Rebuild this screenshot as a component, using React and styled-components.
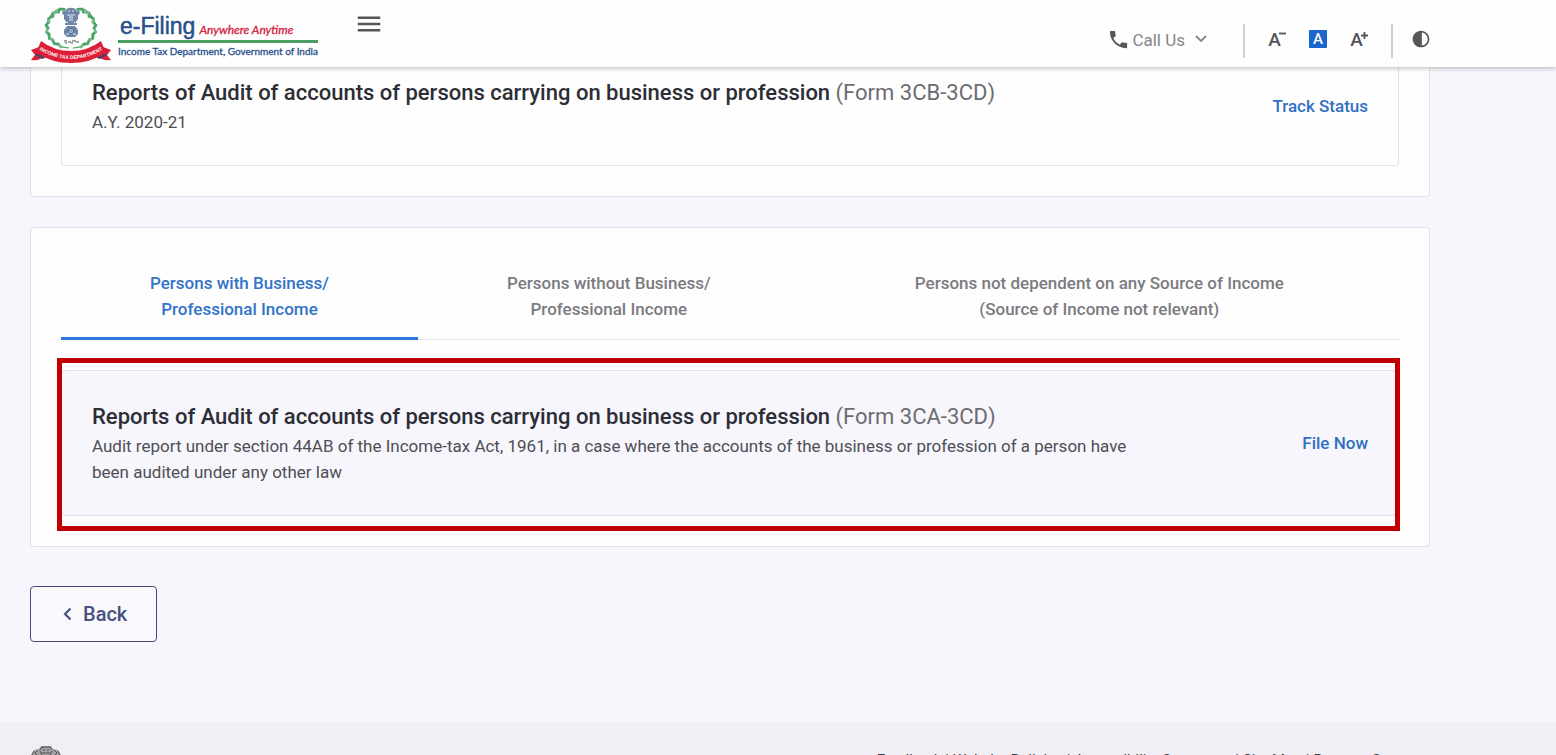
import React from "react";
import styled, { createGlobalStyle } from "styled-components";
import { MdPhone, MdMenu, MdContrast } from "react-icons/md";

const GlobalStyle = createGlobalStyle`
  *, *::before, *::after { box-sizing: border-box; }
  body {
    margin: 0;
    background: #f6f6fc;
    font-family: Roboto, "Liberation Sans", sans-serif;
    color: #2c2c34;
  }
  button { font-family: inherit; cursor: pointer; }
  h2, p { margin: 0; }
`;

const Page = styled.div`
  height: 100vh;
  overflow: hidden;
  display: flex;
  flex-direction: column;
`;

const Header = styled.header`
  position: relative;
  z-index: 1;
  flex: none;
  height: 67px;
  padding: 0 125px 0 30px;
  display: flex;
  align-items: flex-start;
  justify-content: space-between;
  background: #fefefe;
  box-shadow: 0 1px 5px rgba(0, 0, 0, 0.28);
`;

const HeaderStart = styled.div`
  display: flex;
  align-items: flex-start;
  gap: 36px;
`;

const Brand = styled.a`
  display: flex;
  gap: 6px;
  padding-top: 6px;
  text-decoration: none;
`;

const BrandText = styled.span`
  display: flex;
  flex-direction: column;
  padding-top: 6px;
  font-family: Lato, "Liberation Sans", sans-serif;
  white-space: nowrap;
`;

const BrandTop = styled.span`
  display: flex;
  align-items: baseline;
  gap: 4px;
  height: 31px;
  padding-left: 2px;
  line-height: 28px;
  border-bottom: 3px solid #4c9f63;
`;

const BrandName = styled.span`
  font-family: "Liberation Sans", sans-serif;
  font-size: 23px;
  color: #27508c;
  -webkit-text-stroke: 0.5px #27508c;
`;

const BrandTagline = styled.em`
  font-size: 12px;
  color: #d2203c;
  -webkit-text-stroke: 0.3px #d2203c;
`;

const BrandOwner = styled.span`
  font-size: 10px;
  line-height: 16px;
  color: #27508c;
  -webkit-text-stroke: 0.3px #27508c;
`;

const IconButton = styled.button`
  display: flex;
  align-items: center;
  justify-content: center;
  padding: 0;
  border: 0;
  background: none;
  color: #55555a;
`;

const MenuButton = styled(IconButton)`
  width: 30px;
  height: 48px;
`;

const Tools = styled.div`
  display: flex;
  align-items: flex-start;
  padding-top: 24px;
`;

const CallButton = styled(IconButton)`
  gap: 2px;
  height: 30px;
  margin-right: 36px;
  font-size: 17px;
  color: #85858a;
`;

const CallLabel = styled.span`
  padding: 2px 8px 0 0;
`;

const Divider = styled.span`
  width: 2px;
  height: 34px;
  background: #cfcfd2;
`;

const TextSizes = styled.div`
  display: flex;
  align-items: center;
  gap: 22px;
  height: 30px;
  padding: 0 22px;
`;

const SizeButton = styled(IconButton)`
  align-items: flex-start;
  width: 20px;
  height: 20px;
  font-size: 19px;
  line-height: 22px;
  font-weight: 500;
  svg { margin: 2px 0 0 -2px; }
`;

const SizeButtonActive = styled(IconButton)`
  width: 18px;
  height: 18px;
  border-radius: 1px;
  background: #1a66cc;
  color: #fff;
  font-size: 15px;
  font-weight: 500;
`;

const ContrastButton = styled(IconButton)`
  width: 20px;
  height: 30px;
  margin-left: 18px;
`;

const Main = styled.main`
  flex: none;
  padding: 0 126px 80px 30px;
  background: #f6f6fc;
`;

const Panel = styled.section`
  padding: 30px;
  background: #fefefe;
  border: 1px solid #e0e0e8;
  border-radius: 4px;
  & + & { margin-top: 30px; }
`;

const ScrolledPanel = styled(Panel)`
  padding-top: 0;
  border-top: 0;
  border-radius: 0 0 4px 4px;
`;

const FormCard = styled.article`
  position: relative;
  display: flex;
  align-items: center;
  justify-content: space-between;
  gap: 30px;
  padding: 30px;
  border: 1px solid #e2e2ea;
  border-radius: 4px;
  background: ${(p) => (p.$filled ? "#f6f6fc" : "#fefefe")};
`;

const ScrolledCard = styled(FormCard)`
  border-top: 0;
  border-radius: 0 0 4px 4px;
  padding-top: 10px;
`;

const Highlight = styled.div`
  position: absolute;
  inset: -13px -2px -16px -5px;
  border: 5px solid #c00000;
  pointer-events: none;
`;

const CardBody = styled.div`
  max-width: 1064px;
`;

const CardTitle = styled.h2`
  font-size: 22px;
  line-height: 32px;
  font-weight: 500;
  color: #2d2d35;
`;

const FormName = styled.span`
  font-weight: 400;
  color: #6c6c72;
`;

const CardText = styled.p`
  font-size: 17px;
  line-height: 26px;
  color: #4e4e55;
`;

const ActionLink = styled.a`
  flex: none;
  font-size: 17px;
  line-height: 24px;
  font-weight: 500;
  color: #2f70c4;
  text-decoration: none;
`;

const Tabs = styled.div`
  display: flex;
  margin-bottom: 30px;
  border-bottom: 1px solid #e2e2ea;
`;

const Tab = styled.button`
  flex: ${(p) => (p.$wide ? "1 1 auto" : "0 0 auto")};
  height: 82px;
  margin-bottom: -1px;
  padding: 0 89px 3px;
  border: 0;
  border-bottom: 3px solid ${(p) => (p.$active ? "#2878dc" : "transparent")};
  background: none;
  font-size: 17px;
  line-height: 26px;
  font-weight: 500;
  color: ${(p) => (p.$active ? "#3273c8" : "#7b7b80")};
`;

const BackButton = styled.button`
  display: flex;
  align-items: center;
  gap: 11px;
  height: 56px;
  margin-top: 39px;
  padding: 0 29px 0 32px;
  border: 1px solid #47477c;
  border-radius: 4px;
  background: #f8f8fd;
  font-size: 20px;
  font-weight: 500;
  color: #47517c;
`;

const Footer = styled.footer`
  flex: none;
  display: flex;
  align-items: flex-start;
  justify-content: space-between;
  padding: 24px 131px 24px 30px;
  background: #efeff5;
`;

const FooterLinks = styled.nav`
  display: flex;
  gap: 4px;
  padding-top: 4px;
  font-size: 15px;
  line-height: 20px;
  color: #3d3d44;
  a { color: inherit; text-decoration: none; }
`;

const leaves = Array.from({ length: 15 }, (_, i) => 38 + i * 9.4);

function Crest() {
  return (
    <svg width="82" height="59" viewBox="0 0 82 59" aria-hidden="true">
      {[1, -1].map((side) => (
        <g key={side} transform={side === 1 ? undefined : "translate(82 0) scale(-1 1)"}>
          <path d="M43 42 C56 41 65 34 65 21 C65 13 61 7 54 3" fill="none" stroke="#4fa568" strokeWidth="1.2" />
          {leaves.map((deg, i) => {
            const t = ((100 - deg) * Math.PI) / 180;
            const x = 41 + 24 * Math.cos(t);
            const y = 22 + 20 * Math.sin(t);
            return (
              <g key={deg} transform={`translate(${x} ${y}) rotate(${110 - deg + (i % 2 ? 35 : -35)})`}>
                <ellipse rx="1.4" ry="3.2" fill={i % 3 ? "#4ca466" : "#79bb8a"} />
              </g>
            );
          })}
        </g>
      ))}
      <g fill="#6f86a8">
        <path d="M36 4 C37 1 45 1 46 4 L48 7 L46 10 L45 15 L44 17 H38 L37 15 L36 10 L34 7 Z" />
        <path d="M35 5 C32 4 31 8 34 9 V13 L37 17 V7 Z" />
        <path d="M47 5 C50 4 51 8 48 9 V13 L45 17 V7 Z" />
        <rect x="35" y="17" width="12" height="2" />
        <path d="M37 20 H45 L48 24 V28 L45 31 H37 L34 28 V24 Z" />
      </g>
      <path d="M38 5h2m2 0h2M37 9h2m4 0h2M40 8v7M42 8v7M36 28h3m4 0h3" stroke="#e1e7f0" strokeWidth="1" />
      <circle cx="41" cy="25" r="2.6" fill="#dfe6f0" stroke="#4d6c99" />
      <path d="M41 23v4M39 25h4" stroke="#4d6c99" strokeWidth=".7" />
      <path d="M34 35h3m1 1h3m1-1h4m1 1h2M35 37h2m4 0h2m3-1h2" stroke="#4a4f53" strokeWidth="1.1" />
      <path d="M9 41 L1 44 L5 49 L1 54 Q9 55 17 50 Z" fill="#d71f35" />
      <path d="M73 41 L81 44 L77 49 L81 54 Q73 55 65 50 Z" fill="#d71f35" />
      <path d="M5 49 L13 53 L18 49 L10 46 Z M77 49 L69 53 L64 49 L72 46 Z" fill="#344a78" />
      <path d="M11 35 Q24 45 41 45 Q58 45 71 35 L76 47 Q60 57 41 57 Q22 57 6 47 Z" fill="#dd1e36" />
      <path id="crest-ribbon" d="M8 43 Q24 53 41 53 Q58 53 74 43" fill="none" />
      <text fontFamily="Liberation Sans, sans-serif" fontSize="5" fontWeight="700" fill="#fff">
        <textPath href="#crest-ribbon" startOffset="50%" textAnchor="middle">INCOME TAX DEPARTMENT</textPath>
      </text>
    </svg>
  );
}

function FooterEmblem() {
  return (
    <svg width="32" height="44" viewBox="0 0 32 44" aria-hidden="true">
      <path d="M9 3 L11 0 H21 L23 3 L28 4 L31 9 L28 18 L22 28 H10 L4 18 L1 9 L4 4 Z" fill="#a2a2a5" />
      <path d="M10 4l2-3h8l2 3M13 4h2m2 0h2M8 4L5 7l3 3M24 4l3 3-3 3M12 7h8M2 9l2-4M30 9l-2-4M10 5l2 4M22 5l-2 4" fill="none" stroke="#505055" strokeWidth="1" />
      <path d="M8 30h16v5H8zM5 37h22v3H5z" fill="#77777b" />
    </svg>
  );
}

const Chevron = ({ left }) => (
  <svg width={left ? 9 : 12} height={left ? 14 : 8} viewBox={left ? "0 0 9 14" : "0 0 12 8"} fill="none" stroke="currentColor" strokeWidth={left ? 2.2 : 1.8} aria-hidden="true">
    <path d={left ? "M7.5 1.5 2 7l5.5 5.5" : "M1 1l5 5 5-5"} />
  </svg>
);

const SizeMark = ({ plus }) => (
  <svg width="7" height="9" viewBox="0 0 7 9" stroke="currentColor" strokeWidth="1.8" aria-hidden="true">
    <path d={plus ? "M0 4.5h7M3.5 1v7" : "M0 2.5h7"} />
  </svg>
);

const footerItems = ["Feedback", "Website Policies", "Accessibility Statement", "Site Map", "Browser Support"];

export default function App() {
  return (
    <>
      <GlobalStyle />
      <Page>
        <Header>
          <HeaderStart>
            <Brand href="#home" aria-label="e-Filing home">
              <Crest />
              <BrandText>
                <BrandTop>
                  <BrandName>e-Filing</BrandName>
                  <BrandTagline>Anywhere Anytime</BrandTagline>
                </BrandTop>
                <BrandOwner>Income Tax Department, Government of India</BrandOwner>
              </BrandText>
            </Brand>
            <MenuButton aria-label="Menu"><MdMenu size={30} /></MenuButton>
          </HeaderStart>
          <Tools>
            <CallButton>
              <MdPhone size={23} color="#55555a" />
              <CallLabel>Call Us</CallLabel>
              <Chevron />
            </CallButton>
            <Divider />
            <TextSizes>
              <SizeButton aria-label="Decrease text size">A<SizeMark /></SizeButton>
              <SizeButtonActive aria-label="Default text size">A</SizeButtonActive>
              <SizeButton aria-label="Increase text size">A<SizeMark plus /></SizeButton>
            </TextSizes>
            <Divider />
            <ContrastButton aria-label="Contrast"><MdContrast size={22} /></ContrastButton>
          </Tools>
        </Header>
        <Main>
          <ScrolledPanel>
            <ScrolledCard>
              <CardBody>
                <CardTitle>
                  Reports of Audit of accounts of persons carrying on business or profession <FormName>(Form 3CB-3CD)</FormName>
                </CardTitle>
                <CardText>A.Y. 2020-21</CardText>
              </CardBody>
              <ActionLink href="#track">Track Status</ActionLink>
            </ScrolledCard>
          </ScrolledPanel>
          <Panel>
            <Tabs role="tablist">
              <Tab role="tab" aria-selected="true" $active>Persons with Business/<br />Professional Income</Tab>
              <Tab role="tab" aria-selected="false">Persons without Business/<br />Professional Income</Tab>
              <Tab role="tab" aria-selected="false" $wide>Persons not dependent on any Source of Income<br />(Source of Income not relevant)</Tab>
            </Tabs>
            <FormCard $filled>
              <CardBody>
                <CardTitle>
                  Reports of Audit of accounts of persons carrying on business or profession <FormName>(Form 3CA-3CD)</FormName>
                </CardTitle>
                <CardText>
                  Audit report under section 44AB of the Income-tax Act, 1961, in a case where the accounts of the business or profession of a person have been audited under any other law
                </CardText>
              </CardBody>
              <ActionLink href="#file">File Now</ActionLink>
              <Highlight />
            </FormCard>
          </Panel>
          <BackButton><Chevron left />Back</BackButton>
        </Main>
        <Footer>
          <FooterEmblem />
          <FooterLinks>
            {footerItems.map((item, i) => (
              <React.Fragment key={item}>
                {i > 0 && <span>|</span>}
                <a href="#footer">{item}</a>
              </React.Fragment>
            ))}
          </FooterLinks>
        </Footer>
      </Page>
    </>
  );
}
